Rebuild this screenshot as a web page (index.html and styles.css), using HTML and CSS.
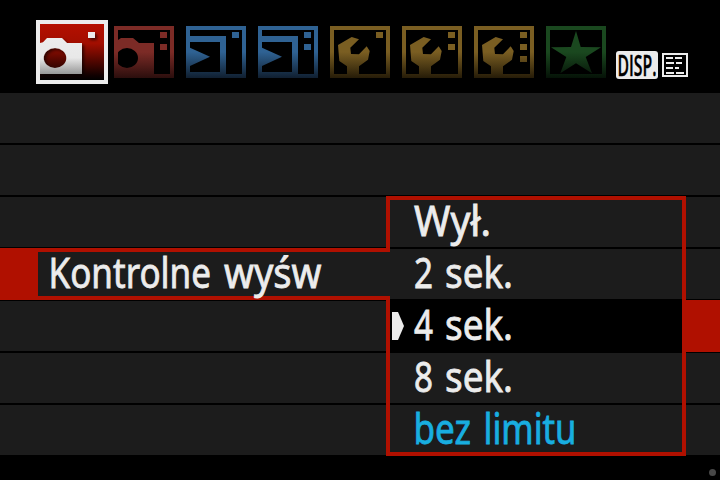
FILE: index.html
```html
<!DOCTYPE html>
<html lang="pl">
<head>
<meta charset="utf-8">
<title>Menu aparatu</title>
<link rel="stylesheet" href="styles.css">
</head>
<body>
<main class="screen">
  <header class="tabs">
    <svg class="tab-active" width="72" height="64" viewBox="0 0 72 64">
      <defs>
        <linearGradient id="red" x1="0" y1="4" x2="0" y2="60" gradientUnits="userSpaceOnUse"><stop offset="0" stop-color="#b51000"/><stop offset=".35" stop-color="#a20e00"/><stop offset=".92" stop-color="#100000"/><stop offset="1" stop-color="#000"/></linearGradient>
        <linearGradient id="cam" x1="0" y1="18" x2="0" y2="54" gradientUnits="userSpaceOnUse"><stop offset="0" stop-color="#ececec"/><stop offset=".55" stop-color="#e8e8e8"/><stop offset="1" stop-color="#979797"/></linearGradient>
        <linearGradient id="g-red" x1="0" y1="0" x2="0" y2="52" gradientUnits="userSpaceOnUse"><stop offset=".5" stop-color="#7c2b26"/><stop offset="1" stop-color="#2b0e0d"/></linearGradient>
        <linearGradient id="g-blue" x1="0" y1="0" x2="0" y2="52" gradientUnits="userSpaceOnUse"><stop offset=".5" stop-color="#2f6293"/><stop offset="1" stop-color="#101f30"/></linearGradient>
        <linearGradient id="g-gold" x1="0" y1="0" x2="0" y2="52" gradientUnits="userSpaceOnUse"><stop offset=".5" stop-color="#7a5e22"/><stop offset="1" stop-color="#261c08"/></linearGradient>
        <linearGradient id="g-green" x1="0" y1="0" x2="0" y2="52" gradientUnits="userSpaceOnUse"><stop offset=".5" stop-color="#1a481f"/><stop offset="1" stop-color="#051207"/></linearGradient>
        <filter id="shadow" x="-30%" y="-30%" width="180%" height="180%"><feDropShadow dx="2" dy="2" stdDeviation="1.7" flood-color="#000" flood-opacity=".6"/></filter>
        <path id="frame" fill-rule="evenodd" d="M0 0H60V52H0ZM4 4V48H56V4Z"/>
        <path id="play" fill-rule="evenodd" d="M4 10H40V48H4ZM4 16V46H34V16ZM4 21.7L24 30.7L4 40Z"/>
        <path id="wrench" d="M8 19L21.7 11L29 13.3L20.3 21.7L21 28L29 28.3L36.7 20.3L39.7 25L38 33.7L29 40.3V48H17V40.3L9.3 35Z"/>
        <path id="dot" d="M46 6H53V12H46Z"/>
      </defs>
      <path fill="#ececec" d="M0 0H72V64H0Z"/>
      <path fill="url(#red)" d="M4 4H68V60H4Z"/>
      <g filter="url(#shadow)" fill="url(#cam)">
        <path fill-rule="evenodd" d="M4 23L7 22.3L11 18H26L31 23H46V54H4ZM19 28A11.3 10 0 1 0 19 48A11.3 10 0 1 0 19 28Z"/>
        <path d="M52 12H59V18H52Z"/>
      </g>
      <path fill="#ececec" d="M0 0H4V64H0Z"/>
    </svg>
    <svg width="60" height="52" fill="url(#g-red)"><use href="#frame"/><path fill-rule="evenodd" d="M4 14L7 12H19L25 17H40V48H4ZM13 22A11 10 0 1 0 13 42A11 10 0 1 0 13 22Z"/><use href="#dot"/><use href="#dot" y="12"/></svg>
    <svg width="60" height="52" fill="url(#g-blue)"><use href="#frame"/><use href="#play"/><use href="#dot"/></svg>
    <svg width="60" height="52" fill="url(#g-blue)"><use href="#frame"/><use href="#play"/><use href="#dot"/><use href="#dot" y="12"/></svg>
    <svg width="60" height="52" fill="url(#g-gold)"><use href="#frame"/><use href="#wrench"/><use href="#dot"/></svg>
    <svg width="60" height="52" fill="url(#g-gold)"><use href="#frame"/><use href="#wrench"/><use href="#dot"/><use href="#dot" y="12"/></svg>
    <svg width="60" height="52" fill="url(#g-gold)"><use href="#frame"/><use href="#wrench"/><use href="#dot"/><use href="#dot" y="12"/><path d="M46 30H53V36H46Z"/></svg>
    <svg width="60" height="52" fill="url(#g-green)"><use href="#frame"/><path d="M30 5L34.7 21L55 21.3L39.7 31L46 47.3L30 37.3L14.3 47.3L20.3 31L5 21.3L25 21Z"/></svg>
    <div class="disp">
      <svg width="42" height="28"><rect width="42" height="28" rx="3" fill="#ececec"/><text class="disp-text" x="1.5" y="24.5" textLength="39" lengthAdjust="spacingAndGlyphs">DISP.</text></svg>
      <svg width="26" height="24" fill="none" stroke="#ececec" stroke-width="2"><path d="M1 1H25V23H1ZM4 5H11M13 5H20M4 10H12M14 10H20M4 15H11M13 15H17M4 20H12M14 20H22"/></svg>
    </div>
  </header>
  <section class="menu">
    <div class="row"></div>
    <div class="row"></div>
    <div class="row"></div>
    <div class="row current">
      <div class="band">
        <div class="label">
          <svg class="copy" width="348" height="44"><text x="10.5" y="36.3" textLength="162.5" lengthAdjust="spacingAndGlyphs">Kontrolne</text><text x="186" y="36.3" textLength="97.5" lengthAdjust="spacingAndGlyphs">wyśw</text></svg>
        </div>
      </div>
    </div>
    <div class="row target"><div class="marker"></div></div>
    <div class="row"></div>
    <div class="row"></div>
    <div class="popup">
      <div class="option"><svg class="copy" width="292" height="47"><text x="24" y="36.3" textLength="77" lengthAdjust="spacingAndGlyphs">Wył.</text></svg></div>
      <div class="option"><svg class="copy" width="292" height="50"><text x="24" y="39.3" textLength="19" lengthAdjust="spacingAndGlyphs">2</text><text x="55" y="39.3" textLength="68" lengthAdjust="spacingAndGlyphs">sek.</text></svg></div>
      <div class="option chosen"><svg class="copy" width="292" height="54"><path d="M2 13H8L14 27L8 41H2Z" stroke="none"/><text x="24" y="41.3" textLength="19" lengthAdjust="spacingAndGlyphs">4</text><text x="55" y="41.3" textLength="68" lengthAdjust="spacingAndGlyphs">sek.</text></svg></div>
      <div class="option"><svg class="copy" width="292" height="50"><text x="24" y="39.3" textLength="19" lengthAdjust="spacingAndGlyphs">8</text><text x="55" y="39.3" textLength="68" lengthAdjust="spacingAndGlyphs">sek.</text></svg></div>
      <div class="option last"><svg class="copy blue" width="292" height="47"><text x="23.5" y="39.3" textLength="57.5" lengthAdjust="spacingAndGlyphs">bez</text><text x="93.5" y="39.3" textLength="93" lengthAdjust="spacingAndGlyphs">limitu</text></svg></div>
      <div class="joint"></div>
    </div>
  </section>
  <footer class="footer"><span class="lamp"></span></footer>
</main>
</body>
</html>
```
FILE: styles.css
```css
* { box-sizing: border-box; }
body { margin: 0; background: #000; }
svg { display: block; flex: none; }
.screen { width: 720px; height: 480px; background: #000; overflow: hidden; display: flex; flex-direction: column; }
.tabs { height: 93px; padding: 20px 0 0 36px; display: flex; align-items: flex-start; gap: 12px; flex: none; }
.tabs > svg { margin-top: 6px; }
.tabs > .tab-active { margin: 0 -6px 0 0; }
.disp { display: flex; align-items: center; gap: 4px; margin: 31px 0 0 -2px; }
.disp-text { font: 600 29.5px "Open Sans", "Noto Sans", sans-serif; fill: #000; stroke: #000; stroke-width: .4px; }
.menu { position: relative; display: grid; grid-template-rows: repeat(7, 50px); row-gap: 2px; height: 362px; flex: none; }
.row { background: #1c1c1c; }
.current, .target { display: flex; }
.band { width: 386px; height: 52px; margin: -1px 0; background: #b01000; padding: 4px 0 4px 38px; }
.label { height: 44px; width: 348px; background: #1c1c1c; }
.target { justify-content: flex-end; }
.marker { width: 34px; height: 52px; margin: -1px 0; background: #b01000; }
.popup { position: absolute; left: 386px; top: 103px; width: 300px; height: 260px; border: 4px solid #b01000; background: #000; display: flex; flex-direction: column; }
.option { background: #1c1c1c; }
.option:first-child { margin-bottom: 2px; }
.option.last { margin-top: 2px; }
.option.chosen { background: #000; }
.joint { position: absolute; left: -4px; top: 52px; width: 4px; height: 44px; background: #1c1c1c; }
.copy { overflow: visible; fill: #ececec; stroke: #ececec; stroke-width: .8px; font: 400 41.5px "Noto Sans", sans-serif; }
.blue { fill: #18aee0; stroke: #18aee0; }
.footer { flex: 1; display: flex; justify-content: flex-end; padding: 14px 4px 0 0; }
.lamp { width: 7px; height: 7px; border-radius: 50%; background: #484848; }
```
